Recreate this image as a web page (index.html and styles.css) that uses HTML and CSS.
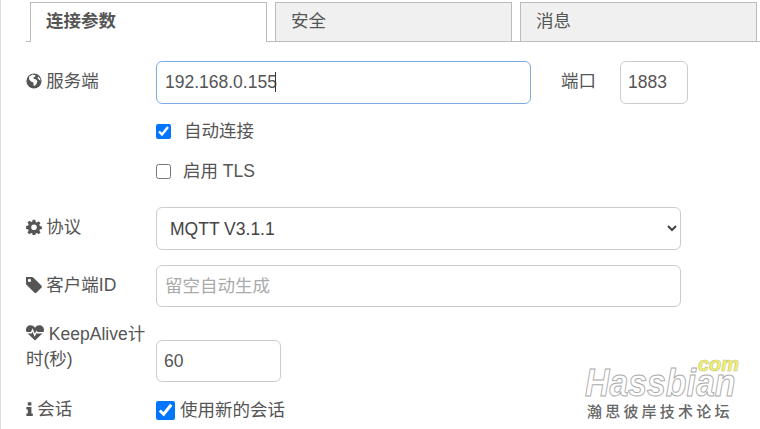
FILE: index.html
```html
<!DOCTYPE html>
<html lang="zh">
<head>
<meta charset="utf-8">
<title>连接参数</title>
<link rel="stylesheet" href="styles.css">
</head>
<body>
<div class="page">
  <div class="tabs">
    <div class="tab active">连接参数</div>
    <div class="tab">安全</div>
    <div class="tab">消息</div>
  </div>
  <form class="form">
    <div class="row row-server">
      <label class="label">
        <svg class="icon" viewBox="0 0 16 16"><circle cx="8" cy="8" r="7.6" fill="#555"/><path d="M3.2 3.6 6.6 1.600 9.600 2.200 9 3.800 7.400 4.200 7.800 5.800 10.200 6.400 11.400 8.200 10.600 10.800 8.600 13 7.600 12.400 7.400 9.600 5 8.600 3 6.200Z" fill="#fff"/><path d="M12 3.400 14 5.400 14.600 7.600 13 6.800 11.600 5Z" fill="#fff"/></svg>
        服务端
      </label>
      <div class="host-wrap">
        <input class="field field-host" type="text" value="192.168.0.155">
        <span class="caret"></span>
      </div>
      <label class="port-label">端口</label>
      <input class="field field-port" type="text" value="1883">
    </div>
    <div class="row row-check-auto">
      <label class="check-line"><input class="check" type="checkbox" checked><span>自动连接</span></label>
    </div>
    <div class="row row-check-tls">
      <label class="check-line check-line-tls"><input class="check" type="checkbox"><span>启用 TLS</span></label>
    </div>
    <div class="row row-protocol">
      <label class="label label-protocol">
        <svg class="icon icon-cog" viewBox="0 0 16 16"><path fill="#555" fill-rule="evenodd" d="M6.700.8h2.600l.4 2.100 1.200.5 1.800-1.200 1.800 1.800-1.200 1.800.5 1.200 2.100.4v2.600l-2.100.4-.5 1.200 1.200 1.800-1.800 1.800-1.800-1.200-1.200.5-.4 2.100H6.700l-.4-2.100-1.200-.5-1.800 1.200-1.800-1.800 1.200-1.800-.5-1.200-2.100-.4V6.900l2.100-.4.5-1.200-1.200-1.800 1.800-1.800 1.800 1.200 1.200-.5zM8 5.400a2.800 2.800 0 1 0 0 5.600 2.800 2.800 0 0 0 0-5.600z"/></svg>
        协议
      </label>
      <select class="field field-select">
        <option>MQTT V3.1.1</option>
      </select>
    </div>
    <div class="row row-client">
      <label class="label">
        <svg class="icon icon-tag" viewBox="1.500 1.500 14 14"><path fill="#555" fill-rule="evenodd" d="M1.500 1.500h5.200c.5 0 1 .2 1.400.6l6.800 6.800c.6.6.6 1.500 0 2.100l-4.100 4.100c-.6.6-1.500.6-2.100 0L1.900 8.300c-.3-.4-.4-.9-.4-1.400zM4.500 3.100a1.400 1.400 0 1 0 0 2.800 1.400 1.400 0 0 0 0-2.800z"/></svg>
        客户端ID
      </label>
      <input class="field field-client" type="text" placeholder="留空自动生成">
    </div>
    <div class="row row-keepalive">
      <label class="label label-keepalive">
        <svg class="icon icon-heart" viewBox="0 0 17 15"><path fill="#555" d="M8.500 14.600 1.800 8.300C.6 7.100 0 6 0 4.600 0 2 2 .2 4.400.2c1.700 0 3.100.8 4.100 2.300C9.500 1 10.900.2 12.600.2 15 .2 17 2 17 4.600c0 1.400-.6 2.500-1.800 3.700z"/><path fill="none" stroke="#fff" stroke-width="1.300" d="M0 7.300h5l1.200-2.700 2 5 1.800-3.300.7 1h6.300"/></svg>
        KeepAlive计时(秒)
      </label>
      <input class="field field-keepalive" type="text" value="60">
    </div>
    <div class="row row-session">
      <label class="label label-session">
        <svg class="icon icon-info" viewBox="0 0 7 14"><path fill="#555" d="M1.800.3h3.600v3.200H1.800zM.4 5h5v6.600h1.400V14H.4v-2.400h1.400V7.400H.4z"/></svg>
        会话
      </label>
      <label class="check-line check-line-session"><input class="check check-large" type="checkbox" checked><span>使用新的会话</span></label>
    </div>
  </form>
</div>
<div class="watermark">
  <span class="wm-name">Hassbian</span>
  <span class="wm-com">com</span>
  <span class="wm-cn">瀚思彼岸技术论坛</span>
</div>
</body>
</html>
```
FILE: styles.css
```css
* { box-sizing: border-box; }
html, body { margin: 0; padding: 0; height: 100%; overflow: hidden; background: #fff; }
body {
  position: relative;
  font-family: "Liberation Sans", "Noto Sans CJK SC", sans-serif;
  font-size: 17.5px;
  color: #555;
  border-left: 1px solid #ddd;
}
.page { padding: 2px 0 0 25px; }
.tabs {
  display: flex;
  gap: 8px;
  height: 40px;
  padding-left: 4px;
  border-bottom: 1px solid #bbb;
}
.tab {
  width: 237px;
  height: 39px;
  padding: 8px 0 0 15px;
  border: 1px solid #bbb;
  border-bottom: 0;
  background: #f0f0f0;
  line-height: 20px;
}
.tab.active {
  height: 40px;
  background: #fff;
  font-weight: bold;
}
.form { display: block; }
.row { display: flex; align-items: flex-start; }
.row-server { margin-top: 19px; }
.row-check-auto { margin-top: 15px; padding-left: 130px; }
.row-check-tls { margin-top: 15px; padding-left: 130px; }
.row-protocol { margin-top: 23px; }
.row-client { margin-top: 15px; }
.row-keepalive { margin-top: 33px; }
.row-session { margin-top: 16px; }
.label {
  display: block;
  width: 130px;
  flex: none;
  line-height: 25px;
  padding-top: 8px;
  word-spacing: -0.5px;
}
.label-keepalive { padding-top: 0; margin-top: -18px; width: 122px; margin-right: 8px; word-spacing: 0; }
.label-session { padding-top: 0; margin-top: -1px; }
.icon { display: inline-block; width: 16px; height: 16px; vertical-align: -2px; }
.icon-cog { width: 16px; }
.icon-tag { width: 16px; }
.icon-heart { width: 18px; height: 16px; vertical-align: -1px; }
.icon-info { width: 7px; height: 14px; vertical-align: -1px; }
.field {
  display: block;
  height: 43px;
  margin: 0;
  padding: 0 8px;
  border: 1px solid #ccc;
  border-radius: 6px;
  background: #fff;
  color: #555;
  font: inherit;
  outline: none;
}
.field::placeholder { color: #aaa; opacity: 1; }
.host-wrap { position: relative; width: 375px; flex: none; }
.field-host { width: 100%; border-color: #7fabe5; }
.caret {
  position: absolute;
  left: 119px;
  top: 11px;
  width: 1px;
  height: 20px;
  background: #333;
}
.port-label { flex: none; width: 58px; margin-left: 30px; margin-right: 1px; line-height: 25px; padding-top: 8px; }
.field-port { width: 68px; padding: 0 7px; }
.field-select { width: 525px; padding: 0 9px; color: #444; }
.field-client { width: 525px; height: 42px; }
.field-keepalive { width: 125px; height: 42px; padding: 0 7px; }
.check-line { display: flex; align-items: center; line-height: 25px; height: 25px; }
.check { width: 15px; height: 15px; margin: 0 13px 0 0; flex: none; }
.check-line-tls .check { margin-right: 12px; }
.check-large { width: 19px; height: 19px; margin-right: 5px; }
.watermark { position: absolute; left: 0; top: 0; width: 100%; height: 100%; pointer-events: none; }
.wm-name, .wm-com, .wm-cn { position: absolute; white-space: nowrap; }
.wm-name {
  left: 584px;
  top: 365px;
  font: italic bold 38px/36px "Liberation Sans", sans-serif;
  color: #fff;
  -webkit-text-stroke: 1px #aaa;
  transform: scaleX(0.89);
  transform-origin: left top;
}
.wm-com {
  left: 697px;
  top: 354px;
  font: italic bold 20px/20px "Liberation Sans", sans-serif;
  color: #f8f466;
  -webkit-text-stroke: 0.7px #c9c98a;
}
.wm-cn {
  left: 586px;
  top: 401px;
  font: 500 15px/20px "Noto Sans CJK SC", sans-serif;
  letter-spacing: 3.2px;
  color: #666;
}
```
